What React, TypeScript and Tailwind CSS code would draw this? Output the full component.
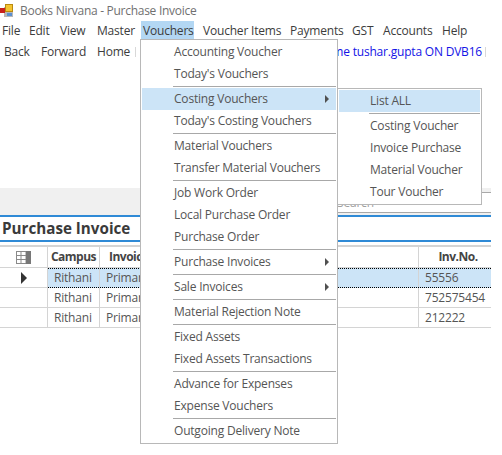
import { Fragment } from 'react';

type Item = { label: string; arrow?: boolean; active?: boolean } | 'sep';

const topMenu = [
  { label: 'File', cls: 'w-[27px]' },
  { label: 'Edit', cls: 'w-[31px]' },
  { label: 'View', cls: 'w-[37px]' },
  { label: 'Master', cls: 'w-[46px]' },
  { label: 'Vouchers', cls: 'w-[53px] mr-[7px] bg-[#b3d7f3]' },
  { label: 'Voucher Items', cls: 'w-[87px]' },
  { label: 'Payments', cls: 'w-[62px]' },
  { label: 'GST', cls: 'w-[31px]' },
  { label: 'Accounts', cls: 'w-[59px]' },
  { label: 'Help', cls: 'w-[40px]' },
];

const vouchers: Item[] = [
  { label: 'Accounting Voucher' },
  { label: "Today's Vouchers" },
  'sep',
  { label: 'Costing Vouchers', arrow: true, active: true },
  { label: "Today's Costing Vouchers" },
  'sep',
  { label: 'Material Vouchers' },
  { label: 'Transfer Material Vouchers' },
  'sep',
  { label: 'Job Work Order' },
  { label: 'Local Purchase Order' },
  { label: 'Purchase Order' },
  'sep',
  { label: 'Purchase Invoices', arrow: true },
  'sep',
  { label: 'Sale Invoices', arrow: true },
  'sep',
  { label: 'Material Rejection Note' },
  'sep',
  { label: 'Fixed Assets' },
  { label: 'Fixed Assets Transactions' },
  'sep',
  { label: 'Advance for Expenses' },
  { label: 'Expense Vouchers' },
  'sep',
  { label: 'Outgoing Delivery Note' },
];

const costing: Item[] = [
  { label: 'List ALL', active: true },
  'sep',
  { label: 'Costing Voucher' },
  { label: 'Invoice Purchase' },
  { label: 'Material Voucher' },
  { label: 'Tour Voucher' },
];

const rows = [
  { campus: 'Rithani', inv: '55556', selected: true },
  { campus: 'Rithani', inv: '752575454', selected: false },
  { campus: 'Rithani', inv: '212222', selected: false },
];

function AppIcon() {
  return (
    <svg width="14" height="13" viewBox="0 0 14 13" className="shrink-0">
      <rect x="4" y="3" width="9" height="10" fill="#b8b8b8" />
      <rect x="0" y="4" width="5" height="5" fill="#c8201c" />
      <rect x="5.5" y="0.5" width="7" height="7" fill="#f4c430" stroke="#b98a10" />
      <rect x="7" y="9" width="5" height="3" fill="#5b8fd0" />
    </svg>
  );
}

function Menu({ items, sub, className }: { items: Item[]; sub?: boolean; className: string }) {
  return (
    <div className={`absolute bg-white border border-[#b8b8b8] p-px flex flex-col text-[#555] ${className}`}>
      {items.map((it, i) => (
        <Fragment key={i}>
          {it === 'sep' ? (
            <div className="h-[3px] flex items-center">
              <div className={`h-px w-full bg-[#a8a8a8] ${sub ? 'ml-[30px]' : 'ml-[31px]'}`} />
            </div>
          ) : (
            <div
              className={`h-[22px] flex items-center justify-between pr-[7px] ${sub ? 'pl-[31px]' : 'pl-[32px]'} ${it.active ? 'bg-[#cce4f7]' : ''}`}
            >
              <span>{it.label}</span>
              {it.arrow && <span className="w-0 h-0 border-y-[4px] border-y-transparent border-l-[4px] border-l-[#505050]" />}
            </div>
          )}
        </Fragment>
      ))}
    </div>
  );
}

export default function App() {
  return (
    <div className="relative w-[502px] h-[455px] overflow-hidden bg-white text-[12px] leading-none tracking-[-0.2px] whitespace-nowrap text-[#555] font-['Open_Sans','Noto_Sans',sans-serif]">
      <div className="h-[21px] flex items-center gap-[6px] tracking-[-0.28px] text-[#707070]">
        <AppIcon />
        <span>Books Nirvana - Purchase Invoice</span>
      </div>

      <div className="h-[18px] flex items-stretch text-[#3c3c3c]">
        {topMenu.map((m) => (
          <div key={m.label} className={`flex items-center pl-[2px] pt-px ${m.cls}`}>
            {m.label}
          </div>
        ))}
      </div>

      <div className="h-[24px] flex items-center pt-px text-[#3c3c3c]">
        <span className="w-[41px] pl-[4px]">Back</span>
        <span className="w-[56px]">Forward</span>
        <span className="w-[38px]">Home</span>
        <span className="w-px h-[10px] bg-[#d8d8d8]" />
        <span className="ml-auto text-[#1414e6]">Welcome tushar.gupta ON DVB16</span>
        <span className="w-px h-[10px] bg-[#d8d8d8] ml-[3px] mr-[16px]" />
      </div>

      <div className="h-[125px]" />

      <div className="w-[491px] h-[29px] bg-[#f0f0f0] border-b-2 border-[#2f8ad6] pt-[4px] pl-[330px]">
        <div className="h-[21px] bg-white border-y border-[#a8a8a8] flex items-center pl-[7px] text-[#a0a0a0]">
          Search
        </div>
      </div>

      <div className="w-[491px] h-[25px] flex items-center pl-[2px] border-b-2 border-[#2f8ad6] text-[15.2px] tracking-normal font-bold text-[#3a3a3a]">
        Purchase Invoice
      </div>

      <div className="w-[491px] mt-[3px]">
        <div className="grid grid-cols-[48px_52px_319px_72px] h-[23px] border-t-2 border-b border-[#d4d4d4] font-bold tracking-[-0.5px] text-[#444]">
          <div className="border-r border-[#d4d4d4] flex items-center justify-center">
            <svg width="15" height="13" viewBox="0 0 15 13">
              <rect x="0.5" y="0.5" width="14" height="12" fill="none" stroke="#8a8a8a" />
              <path d="M5 0v13M10 0v13M0 4.5h15M0 8.5h15" stroke="#8a8a8a" />
              <rect x="10" y="0" width="5" height="13" fill="#777" />
            </svg>
          </div>
          <div className="border-r border-[#d4d4d4] flex items-center justify-center">Campus</div>
          <div className="border-r border-[#d4d4d4] flex items-center pl-[9px]">Invoice Type</div>
          <div className="flex items-center justify-center pl-[6px]">Inv.No.</div>
        </div>
        {rows.map((r, i) => (
          <div key={i} className="flex h-[20px] border-b border-[#d4d4d4]">
            <div className="w-[48px] border-r border-[#d4d4d4] flex items-center justify-center">
              {r.selected && <span className="w-0 h-0 border-y-[6px] border-y-transparent border-l-[6px] border-l-[#333]" />}
            </div>
            <div
              className={`flex-1 grid grid-cols-[52px_319px_72px] ${r.selected ? 'bg-[#cce4f7] border-y border-dotted border-black -mb-px' : ''}`}
            >
              <div className="border-r border-[#d4d4d4] flex items-center pl-[6px]">{r.campus}</div>
              <div className="border-r border-[#d4d4d4] flex items-center pl-[6px]">Primary</div>
              <div className="flex items-center pl-[6px]">{r.inv}</div>
            </div>
          </div>
        ))}
      </div>

      <Menu items={vouchers} className="left-[140px] top-[39px] w-[198px]" />
      <Menu items={costing} sub className="left-[337px] top-[88px] w-[145px]" />
    </div>
  );
}
